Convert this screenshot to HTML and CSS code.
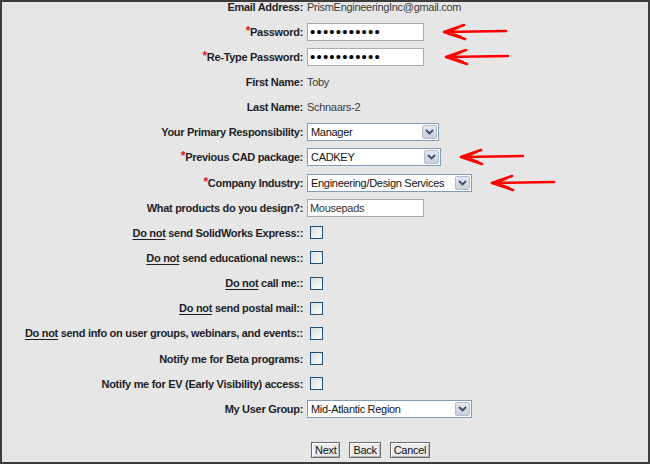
FILE: index.html
```html
<!DOCTYPE html>
<html lang="en">
<head>
  <meta charset="UTF-8">
  <title>Registration - Step 2</title>
  <link rel="stylesheet" href="styles.css">
</head>
<body>
  <div class="frame">
    <form class="reg">
      <div class="row">
        <label class="lbl">Email Address:</label>
        <div class="ctl"><span class="val">PrismEngineeringInc@gmail.com</span></div>
      </div>

      <div class="row">
        <label class="lbl"><span class="req">*</span>Password:</label>
        <div class="ctl">
          <input class="txt pw" type="password" value="xxxxxxxxxxx">
          <svg class="arrow" width="66" height="18" viewBox="0 0 66 18"><path d="M65 8 L3 9 M23 2 L3 9 L24 16 M18 4 L6 9 L20 14" /></svg>
        </div>
      </div>

      <div class="row">
        <label class="lbl"><span class="req">*</span>Re-Type Password:</label>
        <div class="ctl">
          <input class="txt pw" type="password" value="xxxxxxxxxxx">
          <svg class="arrow arrow-wide" width="66" height="18" viewBox="0 0 66 18"><path d="M65 8 L3 9 M23 2 L3 9 L24 16 M18 4 L6 9 L20 14" /></svg>
        </div>
      </div>

      <div class="row">
        <label class="lbl">First Name:</label>
        <div class="ctl"><span class="val">Toby</span></div>
      </div>

      <div class="row">
        <label class="lbl">Last Name:</label>
        <div class="ctl"><span class="val">Schnaars-2</span></div>
      </div>

      <div class="row">
        <label class="lbl">Your Primary Responsibility:</label>
        <div class="ctl">
          <div class="select sel-resp"><span>Manager</span><span class="drop"><svg width="9" height="6" viewBox="0 0 9 6"><path d="M1 1 L4.5 4.5 L8 1" /></svg></span></div>
        </div>
      </div>

      <div class="row">
        <label class="lbl"><span class="req">*</span>Previous CAD package:</label>
        <div class="ctl">
          <div class="select sel-cad"><span>CADKEY</span><span class="drop"><svg width="9" height="6" viewBox="0 0 9 6"><path d="M1 1 L4.5 4.5 L8 1" /></svg></span></div>
          <svg class="arrow" width="66" height="18" viewBox="0 0 66 18"><path d="M65 8 L3 9 M23 2 L3 9 L24 16 M18 4 L6 9 L20 14" /></svg>
        </div>
      </div>

      <div class="row">
        <label class="lbl"><span class="req">*</span>Company Industry:</label>
        <div class="ctl">
          <div class="select sel-wide"><span>Engineering/Design Services</span><span class="drop"><svg width="9" height="6" viewBox="0 0 9 6"><path d="M1 1 L4.5 4.5 L8 1" /></svg></span></div>
          <svg class="arrow" width="66" height="18" viewBox="0 0 66 18"><path d="M65 8 L3 9 M23 2 L3 9 L24 16 M18 4 L6 9 L20 14" /></svg>
        </div>
      </div>

      <div class="row">
        <label class="lbl">What products do you design?:</label>
        <div class="ctl"><input class="txt" type="text" value="Mousepads"></div>
      </div>

      <div class="row">
        <label class="lbl"><u>Do not</u> send SolidWorks Express::</label>
        <div class="ctl"><input class="chk" type="checkbox"></div>
      </div>

      <div class="row">
        <label class="lbl"><u>Do not</u> send educational news::</label>
        <div class="ctl"><input class="chk" type="checkbox"></div>
      </div>

      <div class="row">
        <label class="lbl"><u>Do not</u> call me::</label>
        <div class="ctl"><input class="chk" type="checkbox"></div>
      </div>

      <div class="row">
        <label class="lbl"><u>Do not</u> send postal mail::</label>
        <div class="ctl"><input class="chk" type="checkbox"></div>
      </div>

      <div class="row">
        <label class="lbl"><u>Do not</u> send info on user groups, webinars, and events::</label>
        <div class="ctl"><input class="chk" type="checkbox"></div>
      </div>

      <div class="row">
        <label class="lbl">Notify me for Beta programs:</label>
        <div class="ctl"><input class="chk" type="checkbox"></div>
      </div>

      <div class="row">
        <label class="lbl">Notify me for EV (Early Visibility) access:</label>
        <div class="ctl"><input class="chk" type="checkbox"></div>
      </div>

      <div class="row">
        <label class="lbl">My User Group:</label>
        <div class="ctl">
          <div class="select sel-wide"><span>Mid-Atlantic Region</span><span class="drop"><svg width="9" height="6" viewBox="0 0 9 6"><path d="M1 1 L4.5 4.5 L8 1" /></svg></span></div>
        </div>
      </div>

      <div class="buttons">
        <button type="button" class="btn">Next</button>
        <button type="button" class="btn">Back</button>
        <button type="button" class="btn">Cancel</button>
      </div>
    </form>
  </div>
</body>
</html>
```

FILE: styles.css
```css
* {
  margin: 0;
  padding: 0;
  box-sizing: border-box;
}

html, body {
  width: 650px;
  height: 464px;
  overflow: hidden;
}

body {
  background: #3c3c3c;
  font-family: "Liberation Sans", Arial, sans-serif;
  font-size: 11px;
  color: #222;
}

.frame {
  height: 464px;
  border: 2px solid #3c3c3c;
  background: #e6e6e6;
  overflow: hidden;
}

.reg {
  margin-top: -8px;
}

.row {
  display: grid;
  grid-template-columns: 301px 1fr;
  column-gap: 4px;
  align-items: center;
  height: 25.15px;
}

.lbl {
  text-align: right;
  font-weight: bold;
  color: #1e1e28;
  white-space: nowrap;
  letter-spacing: -0.3px;
}

.lbl u {
  text-underline-offset: 2px;
}

.req {
  color: #e02020;
  font-size: 12px;
  position: relative;
  top: -1px;
}

.ctl {
  display: flex;
  align-items: center;
}

.val {
  color: #3a3a3a;
  letter-spacing: -0.3px;
}

.txt {
  width: 117px;
  height: 18px;
  border: 1px solid #a5acb2;
  background: #fff;
  font-family: "Liberation Sans", Arial, sans-serif;
  font-size: 11px;
  letter-spacing: -0.3px;
  color: #333;
  padding: 0 2px;
  outline: none;
}

.txt.pw {
  font-size: 15px;
  letter-spacing: 1.2px;
  color: #000;
}

.select {
  display: flex;
  align-items: center;
  justify-content: space-between;
  height: 18px;
  border: 1px solid #7f9db9;
  background: #fff;
  color: #111;
  letter-spacing: -0.3px;
  padding-left: 3px;
  padding-right: 1px;
}

.sel-resp {
  width: 132px;
}

.sel-cad {
  width: 134px;
}

.sel-wide {
  width: 165px;
}

.drop {
  width: 15px;
  height: 14px;
  display: flex;
  align-items: center;
  justify-content: center;
  border: 1px solid #b4bccd;
  border-radius: 2px;
  background: linear-gradient(#e4e8f1, #c8cedc);
}

.drop path {
  fill: none;
  stroke: #3e4c6a;
  stroke-width: 1.8;
}

.chk {
  appearance: none;
  width: 13px;
  height: 13px;
  margin-left: 3px;
  border: 1px solid #1c5180;
  background: linear-gradient(135deg, #dcdcd7 0%, #f4f4f2 70%, #fff 100%);
}

.arrow {
  margin-left: 17px;
  overflow: visible;
}

.arrow-wide {
  margin-left: 19px;
}

.arrow path {
  fill: none;
  stroke: #ff0000;
  stroke-width: 2.6;
  stroke-linecap: round;
  stroke-linejoin: round;
}

.buttons {
  display: flex;
  gap: 9px;
  margin-top: 21px;
  padding-left: 309px;
}

.btn {
  height: 16px;
  padding: 0 3px;
  font-family: "Liberation Sans", Arial, sans-serif;
  font-size: 11px;
  letter-spacing: -0.3px;
  color: #111;
  background: #ebebeb;
  border: 1px solid #6a6a6a;
  box-shadow: inset 1px 1px #fff, inset -1px -1px #b8b8b8;
}
```
